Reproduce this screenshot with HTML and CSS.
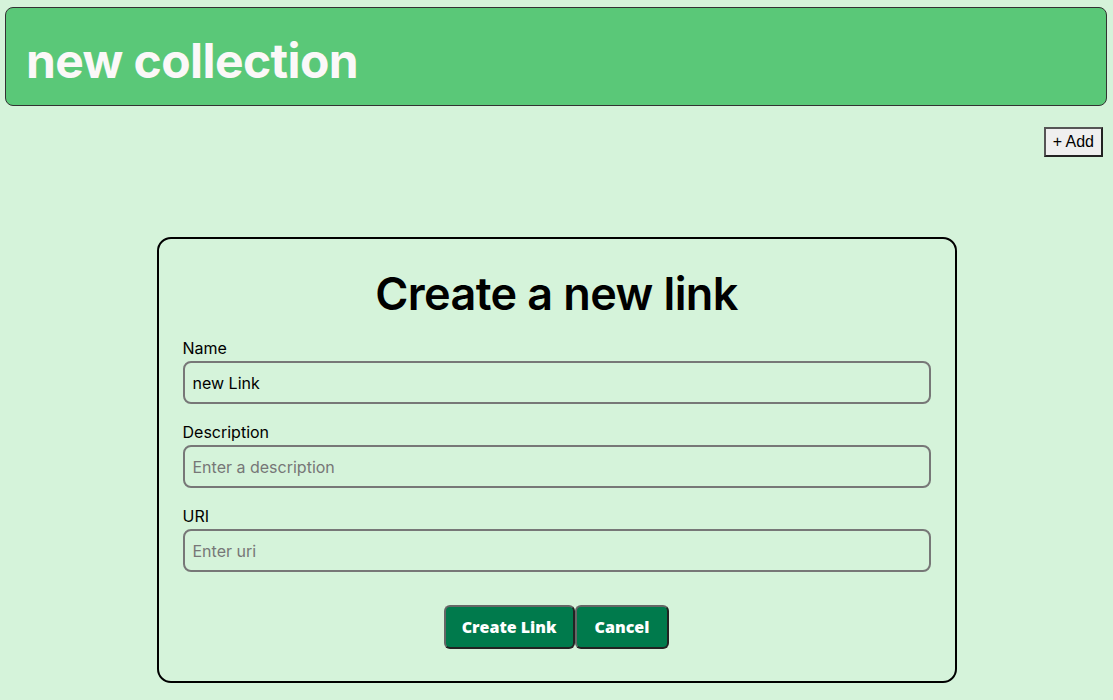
FILE: index.html
```html
<!DOCTYPE html>
<html>
<head>
<meta charset="utf-8">
<link rel="stylesheet" href="styles.css">
</head>
<body>
<header class="top">
  <h1 class="top-title">new collection</h1>
</header>
<div class="toolbar">
  <button class="add-btn">+ Add</button>
</div>
<div class="card">
  <h2 class="card-title">Create a new link</h2>
  <form class="form">
    <div class="field">
      <label class="label">Name</label>
      <input class="input" type="text" value="new Link">
    </div>
    <div class="field">
      <label class="label">Description</label>
      <input class="input" type="text" placeholder="Enter a description">
    </div>
    <div class="field">
      <label class="label">URI</label>
      <input class="input" type="text" placeholder="Enter uri">
    </div>
    <div class="actions">
      <button type="button" class="btn">Create Link</button>
      <button type="button" class="btn btn-cancel">Cancel</button>
    </div>
  </form>
</div>
</body>
</html>
```

FILE: styles.css
```css
html, body {
  margin: 0;
  padding: 0;
}
body {
  background: #d5f3da;
  font-family: Inter, "Liberation Sans", sans-serif;
  color: #000;
  height: 700px;
  overflow: hidden;
}
.top {
  margin: 7px 6px 0 5px;
  height: 99px;
  box-sizing: border-box;
  background: #5ac878;
  border: 1px solid #333;
  border-radius: 8px;
  display: flex;
  align-items: center;
  padding: 8px 0 0 20px;
}
.top-title {
  margin: 0;
  color: #fbf8f8;
  font-size: 48px;
  font-weight: 700;
  letter-spacing: -0.6px;
}
.toolbar {
  display: flex;
  justify-content: flex-end;
  margin: 21px 10px 0 0;
}
.add-btn {
  font-family: "Liberation Sans", Arial, sans-serif;
  font-size: 16px;
  background: #efefef;
  border: 2px solid #333;
  border-color: #555 #222 #222 #555;
  padding: 4px 7px;
  height: 30px;
  color: #000;
}
.card {
  width: 800px;
  box-sizing: border-box;
  margin: 80px auto 0;
  border: 2px solid #000;
  border-radius: 14px;
  padding: 24px 24px 32px;
}
.card-title {
  margin: 4px 0 18px;
  text-align: center;
  font-size: 45px;
  font-weight: 600;
  letter-spacing: -0.6px;
  line-height: 54px;
}
.form {
  display: flex;
  flex-direction: column;
}
.field {
  display: flex;
  flex-direction: column;
  margin-bottom: 19px;
}
.label {
  font-size: 16px;
  line-height: 18px;
  margin-bottom: 4px;
}
.input {
  height: 43px;
  box-sizing: border-box;
  border: 2px solid #777;
  border-radius: 8px;
  background: transparent;
  font-family: Inter, "Liberation Sans", sans-serif;
  font-size: 16px;
  padding: 0 8px;
  color: #000;
}
.input::placeholder {
  color: #777;
}
.actions {
  display: flex;
  justify-content: center;
  margin-top: 14px;
}
.btn {
  height: 44px;
  background: #007a4c;
  color: #fff;
  border: 2px solid #555;
  border-color: #666 #222 #222 #666;
  border-radius: 6px;
  font-family: "Open Sans", sans-serif;
  font-weight: 800;
  font-size: 16px;
  padding: 0 16px;
}
.btn-cancel {
  padding: 0 18px;
}
```
